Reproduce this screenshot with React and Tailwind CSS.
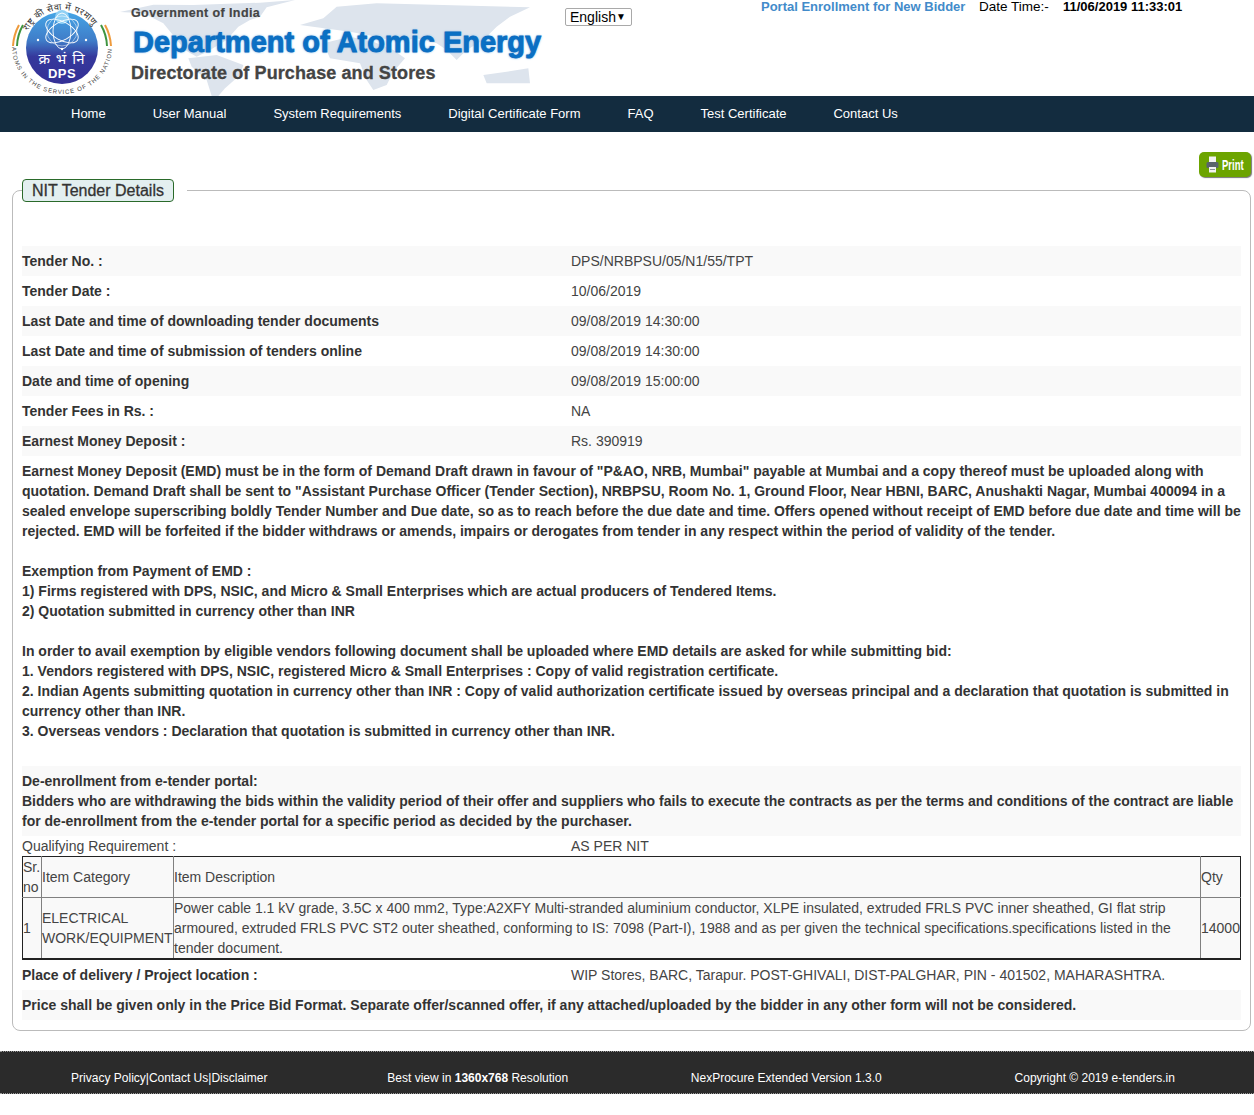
const navItems = ['Home', 'User Manual', 'System Requirements', 'Digital Certificate Form', 'FAQ', 'Test Certificate', 'Contact Us']

const summaryRows = [
  ['Tender No. :', 'DPS/NRBPSU/05/N1/55/TPT'],
  ['Tender Date :', '10/06/2019'],
  ['Last Date and time of downloading tender documents', '09/08/2019 14:30:00'],
  ['Last Date and time of submission of tenders online', '09/08/2019 14:30:00'],
  ['Date and time of opening', '09/08/2019 15:00:00'],
  ['Tender Fees in Rs. :', 'NA'],
  ['Earnest Money Deposit :', 'Rs. 390919'],
]

const emdLines = [
  'Earnest Money Deposit (EMD) must be in the form of Demand Draft drawn in favour of "P&AO, NRB, Mumbai" payable at Mumbai and a copy thereof must be uploaded along with',
  'quotation. Demand Draft shall be sent to "Assistant Purchase Officer (Tender Section), NRBPSU, Room No. 1, Ground Floor, Near HBNI, BARC, Anushakti Nagar, Mumbai 400094 in a',
  'sealed envelope superscribing boldly Tender Number and Due date, so as to reach before the due date and time. Offers opened without receipt of EMD before due date and time will be',
  'rejected. EMD will be forfeited if the bidder withdraws or amends, impairs or derogates from tender in any respect within the period of validity of the tender.',
  '',
  'Exemption from Payment of EMD :',
  '1) Firms registered with DPS, NSIC, and Micro & Small Enterprises which are actual producers of Tendered Items.',
  '2) Quotation submitted in currency other than INR',
  '',
  'In order to avail exemption by eligible vendors following document shall be uploaded where EMD details are asked for while submitting bid:',
  '1. Vendors registered with DPS, NSIC, registered Micro & Small Enterprises : Copy of valid registration certificate.',
  '2. Indian Agents submitting quotation in currency other than INR : Copy of valid authorization certificate issued by overseas principal and a declaration that quotation is submitted in',
  'currency other than INR.',
  '3. Overseas vendors : Declaration that quotation is submitted in currency other than INR.',
  '',
]

function Logo() {
  return (
    <svg width="125" height="96" viewBox="0 0 125 96" className="relative shrink-0">
      <defs>
        <linearGradient id="disc" x1="0" y1="0" x2="0" y2="1">
          <stop offset="0" stopColor="#45a5e6" />
          <stop offset="0.4" stopColor="#3f7cc8" />
          <stop offset="0.62" stopColor="#35389c" />
          <stop offset="1" stopColor="#343096" />
        </linearGradient>
        <path id="topArc" d="M28 31 A38 38 0 0 1 96 31" />
        <path id="bottomArc" d="M12 47 A50 47 0 0 0 112 47" />
      </defs>
      <path d="M13 46 A49 49 0 0 1 19 25" fill="none" stroke="#ee9a3c" strokeWidth="2" />
      <path d="M17 46 A45 45 0 0 1 23 25" fill="none" stroke="#3f9440" strokeWidth="2" />
      <path d="M111 46 A49 49 0 0 0 105 25" fill="none" stroke="#ee9a3c" strokeWidth="2" />
      <path d="M107 46 A45 45 0 0 0 101 25" fill="none" stroke="#3f9440" strokeWidth="2" />
      <circle cx="62" cy="48" r="36" fill="url(#disc)" />
      <circle cx="62" cy="17" r="7" fill="#8fd0f4" />
      <g fill="none" stroke="#fff" strokeWidth="0.9">
        <ellipse cx="62" cy="31" rx="9" ry="18" />
        <ellipse cx="62" cy="31" rx="9" ry="18" transform="rotate(60 62 31)" />
        <ellipse cx="62" cy="31" rx="9" ry="18" transform="rotate(-60 62 31)" />
        <circle cx="62" cy="31" r="15" strokeWidth="0.5" />
      </g>
      <circle cx="38" cy="40" r="1.2" fill="#fff" />
      <circle cx="86" cy="40" r="1.2" fill="#fff" />
      <circle cx="62" cy="49" r="1.2" fill="#fff" />
      <text x="62" y="64" textAnchor="middle" fontSize="15" fill="#fff" letterSpacing="1" fontFamily="'Noto Sans', 'DejaVu Sans', sans-serif">क्र भं नि</text>
      <text x="62" y="78" textAnchor="middle" fontSize="13" fontWeight="700" fill="#fff" letterSpacing="0.5" fontFamily="'Liberation Sans', sans-serif">DPS</text>
      <text fontSize="9" fill="#333" fontFamily="'Noto Sans', 'DejaVu Sans', sans-serif">
        <textPath href="#topArc" textLength="78">राष्ट्र की सेवा में परमाणु</textPath>
      </text>
      <text fontSize="6" fill="#444" fontFamily="'Liberation Sans', sans-serif">
        <textPath href="#bottomArc" textLength="150">ATOMS IN THE SERVICE OF THE NATION</textPath>
      </text>
    </svg>
  )
}

function WorldMap() {
  return (
    <svg width="450" height="96" viewBox="0 0 1350 288" className="absolute left-[-15px] top-0" fill="#dde4ed">
      <path d="M30 36 L130 14 L250 15 L450 8 L555 0 L470 22 L450 50 L420 60 L385 80 L350 120 L300 150 L260 170 L225 150 L160 70 L100 40 Z" />
      <path d="M235 175 L320 165 L400 195 L390 225 L345 265 L325 288 L305 288 L290 240 L245 200 Z" />
      <path d="M570 75 L640 55 L680 20 L800 10 L1000 15 L1260 22 L1200 50 L1160 80 L1120 120 L1070 150 L1040 180 L1010 150 L980 130 L920 115 L860 125 L800 110 L720 95 Z" />
      <path d="M640 130 L720 110 L790 125 L850 150 L885 175 L850 215 L830 255 L790 270 L770 240 L750 190 L660 175 Z" />
      <path d="M1120 225 L1190 215 L1255 205 L1260 250 L1200 250 L1130 250 Z" />
    </svg>
  )
}

function Banner() {
  return (
    <div className="relative h-full w-[440px] shrink-0 text-[#444]">
      <WorldMap />
      <div className="relative pl-[6px]">
        <div className="pt-[5px] text-[12.5px] leading-[16px] font-bold tracking-[0.4px] [-webkit-text-stroke:0.2px_#444]">Government of India</div>
        <div className="mt-[3px] pl-[2px] text-[29px] leading-[36px] font-bold text-[#0a70c4] whitespace-nowrap [-webkit-text-stroke:0.8px_#0a6cc0] [text-shadow:0_0_2px_#6fb0e6,0_0_3px_#a6cdee]">
          Department of Atomic Energy
        </div>
        <div className="mt-[1px] text-[18px] leading-[24px] font-bold tracking-[0.1px] [-webkit-text-stroke:0.3px_#444]">Directorate of Purchase and Stores</div>
      </div>
    </div>
  )
}

function PrintIcon() {
  return (
    <svg width="13" height="17" viewBox="0 0 13 17">
      <rect x="3" y="0.5" width="7" height="6" fill="#f2f2f2" />
      <rect x="0.5" y="6" width="12" height="6" rx="1.5" fill="#59636b" />
      <rect x="3" y="11" width="7" height="5.5" fill="#f2f2f2" />
      <rect x="4" y="13" width="5" height="1" fill="#8a9298" />
    </svg>
  )
}

function Row({ label, value, shaded }) {
  return (
    <div className={`flex h-[30px] items-center ${shaded ? 'bg-[#f9f9f9]' : ''}`}>
      <div className="w-[549px] shrink-0 font-bold">{label}</div>
      <div className="text-[#444]">{value}</div>
    </div>
  )
}

export default function App() {
  return (
    <div className="min-h-[1115px] bg-white text-[14px] leading-[20px] text-[#333] font-['Liberation_Sans',Arial,sans-serif]">
      {/* Header */}
      <header className="flex h-[96px] overflow-hidden">
        <Logo />
        <Banner />
        <div className="relative mt-[8px] flex h-[18px] w-[67px] shrink-0 items-center justify-between rounded-[2px] border border-[#a9a9a9] bg-white pl-[4px] pr-[5px] text-black">
          <span>English</span>
          <span className="text-[10px]">▼</span>
        </div>
        <div className="ml-[129px] mt-[-3px] flex whitespace-nowrap text-black">
          <span className="w-[218px] text-[13px] font-bold text-[#428bca]">Portal Enrollment for New Bidder</span>
          <span className="w-[84px] text-[13.5px]">Date Time:-</span>
          <span className="text-[13px] font-bold">11/06/2019 11:33:01</span>
        </div>
      </header>

      {/* Nav */}
      <nav className="flex h-[36px] items-center bg-[#132c3f] pl-[47.5px] text-[13px] text-white">
        {navItems.map((item) => (
          <a key={item} href="#" className="px-[23.5px]">{item}</a>
        ))}
      </nav>

      {/* Print */}
      <div className="flex justify-end pr-[3px] pt-[20px]">
        <button className="flex h-[25px] w-[52px] items-center gap-[3px] rounded-[5px] bg-[#6ca400] pl-[7px] text-white shadow-[1px_1px_1px_#777]">
          <PrintIcon />
          <span className="inline-block w-[22px] origin-left scale-x-[0.68] text-[14px] font-bold">Print</span>
        </button>
      </div>

      {/* Details */}
      <fieldset className="ml-[12px] mr-[3px] mt-[2px] rounded-[8px] border border-[#bbb] px-[9px] pb-[10px]">
        <legend className="p-0 pr-[13px]">
          <div className="flex h-[23px] w-[152px] items-center justify-center rounded-[4px] border border-[#2a6a2a] bg-[#e3eff0] text-[16px] [-webkit-text-stroke:0.3px_#333]">
            NIT Tender Details
          </div>
        </legend>
        <div className="pt-[44px]">
          {summaryRows.map(([label, value], i) => (
            <Row key={label} label={label} value={value} shaded={i % 2 === 0} />
          ))}
          <div className="py-[5px] font-bold whitespace-nowrap">
            {emdLines.map((line, i) => (
              <div key={i} className="h-[20px]">{line}</div>
            ))}
          </div>
          <div className="bg-[#f9f9f9] py-[5px] font-bold whitespace-nowrap">
            <div>De-enrollment from e-tender portal:</div>
            <div>Bidders who are withdrawing the bids within the validity period of their offer and suppliers who fails to execute the contracts as per the terms and conditions of the contract are liable</div>
            <div>for de-enrollment from the e-tender portal for a specific period as decided by the purchaser.</div>
          </div>
          <div className="flex h-[20px] items-center text-[#444]">
            <div className="w-[549px] shrink-0">Qualifying Requirement :</div>
            <div>AS PER NIT</div>
          </div>
          <table className="w-full table-fixed border-collapse border border-b-2 border-[#222] bg-[#f9f9f9] text-[#444]">
            <colgroup>
              <col className="w-[19px]" />
              <col className="w-[132px]" />
              <col />
              <col className="w-[40px]" />
            </colgroup>
            <tbody>
              <tr className="h-[41px]">
                <td className="border border-[#808080] border-t-[#222] border-l-[#222] px-0">Sr. no</td>
                <td className="border border-[#808080] border-t-[#222] px-0">Item Category</td>
                <td className="border border-[#808080] border-t-[#222] px-0">Item Description</td>
                <td className="border border-[#808080] border-t-[#222] border-r-[#222] px-0">Qty</td>
              </tr>
              <tr>
                <td className="border border-[#808080] border-b-[#222] border-l-[#222] px-0">1</td>
                <td className="border border-[#808080] border-b-[#222] px-0">ELECTRICAL WORK/EQUIPMENT</td>
                <td className="border border-[#808080] border-b-[#222] px-0">
                  Power cable 1.1 kV grade, 3.5C x 400 mm2, Type:A2XFY Multi-stranded aluminium conductor, XLPE insulated, extruded FRLS PVC inner sheathed, GI flat strip armoured, extruded FRLS PVC ST2 outer sheathed, conforming to IS: 7098 (Part-I), 1988 and as per given the technical specifications.specifications listed in the tender document.
                </td>
                <td className="border border-[#808080] border-b-[#222] border-r-[#222] px-0">14000</td>
              </tr>
            </tbody>
          </table>
          <Row label="Place of delivery / Project location :" value="WIP Stores, BARC, Tarapur. POST-GHIVALI, DIST-PALGHAR, PIN - 401502, MAHARASHTRA." />
          <div className="flex h-[30px] items-center bg-[#f9f9f9] font-bold">
            Price shall be given only in the Price Bid Format. Separate offer/scanned offer, if any attached/uploaded by the bidder in any other form will not be considered.
          </div>
        </div>
      </fieldset>

      {/* Footer */}
      <footer className="mt-[20px] grid h-[43px] grid-cols-4 items-center border-y border-dotted border-[#999] bg-[#2b2b2b] pl-[15px] pr-[5px] pt-[10px] text-center text-[12px] text-white">
        <div>Privacy Policy|Contact Us|Disclaimer</div>
        <div>Best view in <b>1360x768</b> Resolution</div>
        <div>NexProcure Extended Version 1.3.0</div>
        <div>Copyright © 2019 e-tenders.in</div>
      </footer>
    </div>
  )
}
